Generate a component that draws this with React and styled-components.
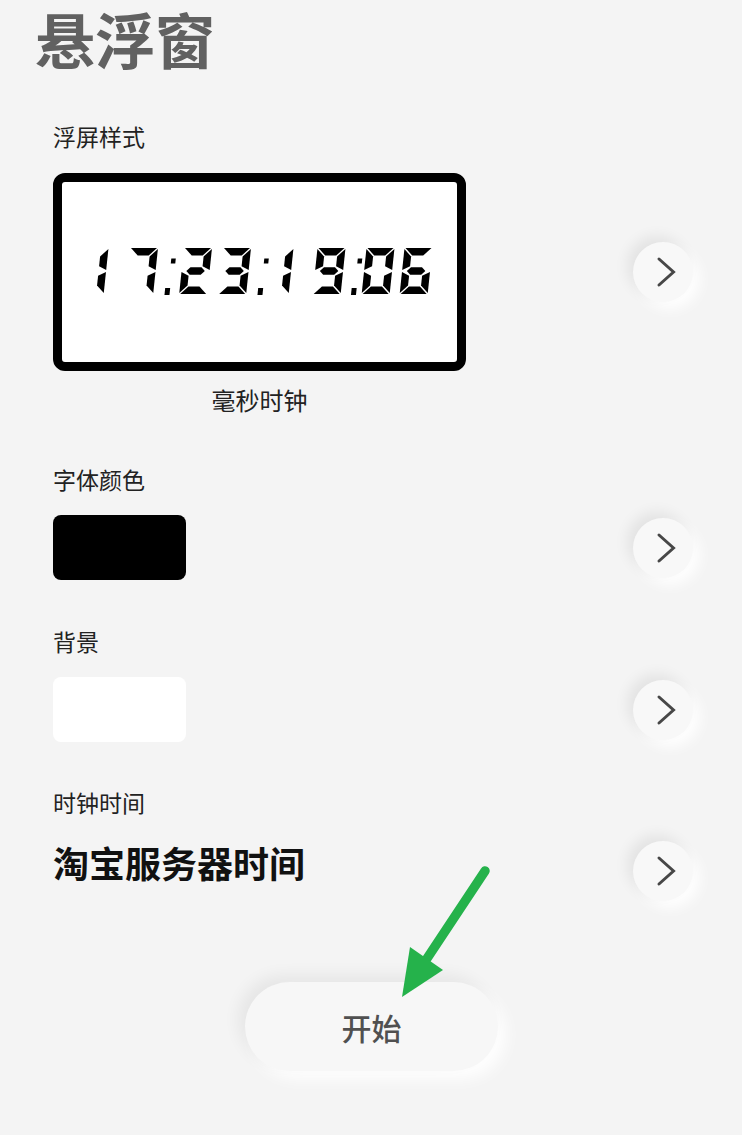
import React from "react";
import styled, { createGlobalStyle } from "styled-components";

const GlobalStyle = createGlobalStyle`
  html, body {
    margin: 0;
    padding: 0;
    background: #f4f4f4;
  }
  body {
    font-family: "Noto Sans CJK SC", "Noto Sans", sans-serif;
  }
`;

const Page = styled.div`
  width: 742px;
  min-height: 1135px;
  box-sizing: border-box;
  padding-top: 2px;
  display: flex;
  flex-direction: column;
  background: #f4f4f4;
`;

const Title = styled.h1`
  margin: 0;
  padding-left: 35px;
  font-size: 60px;
  line-height: 72px;
  font-weight: 700;
  color: #616161;
`;

const Settings = styled.div`
  display: flex;
  flex-direction: column;
  padding: 0 49px 0 53px;
`;

const Section = styled.section`
  display: flex;
  flex-direction: column;
  margin-top: ${(p) => p.$gap}px;
`;

const Label = styled.div`
  font-size: 23px;
  line-height: 1;
  color: #222;
`;

const Row = styled.div`
  display: flex;
  align-items: center;
  justify-content: space-between;
  margin-top: ${(p) => p.$gap}px;
`;

const ClockFace = styled.div`
  width: 413px;
  height: 198px;
  box-sizing: border-box;
  border: 9px solid #000;
  border-radius: 12px;
  background: #fff;
  display: flex;
  align-items: center;
  justify-content: center;
`;

const Caption = styled.div`
  width: 413px;
  margin-top: 17px;
  text-align: center;
  font-size: 24px;
  line-height: 1;
  color: #222;
`;

const Swatch = styled.div`
  width: 133px;
  height: 65px;
  border-radius: 8px;
  background: ${(p) => p.$color};
`;

const ValueText = styled.div`
  font-size: 36px;
  line-height: 1;
  font-weight: 700;
  color: #111;
  padding-bottom: 18px;
`;

const NavButton = styled.button`
  width: 60px;
  height: 60px;
  flex: none;
  padding: 0;
  border: none;
  border-radius: 50%;
  background: #f8f8f8;
  box-shadow: -6px -6px 14px rgba(0, 0, 0, 0.07),
    7px 7px 14px rgba(255, 255, 255, 0.95);
  display: flex;
  align-items: center;
  justify-content: center;
  cursor: pointer;
`;

const ButtonArea = styled.div`
  position: relative;
  display: flex;
  justify-content: center;
  margin-top: 81px;
`;

const StartButton = styled.button`
  width: 253px;
  height: 89px;
  border: none;
  border-radius: 45px;
  background: #f7f7f7;
  box-shadow: -7px -7px 16px rgba(0, 0, 0, 0.06),
    8px 8px 16px rgba(255, 255, 255, 0.95);
  font-family: "Noto Sans CJK SC", "Noto Sans", sans-serif;
  font-size: 30px;
  font-weight: 500;
  color: #505050;
  cursor: pointer;
  margin-left: 1px;
`;

const Pointer = styled.svg`
  position: absolute;
  left: 395px;
  top: -120px;
  overflow: visible;
  pointer-events: none;
`;

const Chevron = () => (
  <svg width="60" height="60" viewBox="0 0 60 60">
    <polyline
      points="26,17 40.5,30 26,43"
      fill="none"
      stroke="#474747"
      strokeWidth="3"
      strokeLinecap="round"
      strokeLinejoin="miter"
    />
  </svg>
);

/* seven-segment digit geometry */
const W = 28;
const H = 46;
const T = 7.5;
const G = 1;
const SEGMENTS = {
  a: [[G, 0], [W - G, 0], [W - G - T, T], [G + T, T]],
  b: [[W, G], [W, H / 2 - G], [W - T, H / 2 - G - T / 2], [W - T, G + T]],
  c: [[W, H / 2 + G], [W, H - G], [W - T, H - G - T], [W - T, H / 2 + G + T / 2]],
  d: [[G, H], [W - G, H], [W - G - T, H - T], [G + T, H - T]],
  e: [[0, H / 2 + G], [0, H - G], [T, H - G - T], [T, H / 2 + G + T / 2]],
  f: [[0, G], [0, H / 2 - G], [T, H / 2 - G - T / 2], [T, G + T]],
  g: [
    [G + T / 2, H / 2],
    [G + T, H / 2 - T / 2],
    [W - G - T, H / 2 - T / 2],
    [W - G - T / 2, H / 2],
    [W - G - T, H / 2 + T / 2],
    [G + T, H / 2 + T / 2],
  ],
};
const DIGITS = {
  0: "abcdef",
  1: "bc",
  2: "abged",
  3: "abgcd",
  6: "afgedc",
  7: "abc",
  9: "abcdfg",
};

const Digit = ({ value, x }) => (
  <g transform={`translate(${x} 1) skewX(-6)`}>
    {DIGITS[value].split("").map((s) => (
      <polygon key={s} points={SEGMENTS[s].map((p) => p.join(",")).join(" ")} />
    ))}
  </g>
);

const Colon = ({ x }) => (
  <g transform={`translate(${x} 0) skewX(-6)`}>
    <rect x="3" y="11.5" width="4.5" height="5" />
    <rect x="0" y="41" width="5" height="7" />
  </g>
);

const layout = [
  { d: 1, x: 0.5 },
  { d: 7, x: 50 },
  { c: true, x: 89.5 },
  { d: 2, x: 104 },
  { d: 3, x: 143 },
  { c: true, x: 182.5 },
  { d: 1, x: 185.5 },
  { d: 9, x: 237.5 },
  { c: true, x: 276 },
  { d: 0, x: 286.5 },
  { d: 6, x: 324.5 },
];

const SegmentClock = () => (
  <svg width="360" height="50" viewBox="0 0 360 50" fill="#000">
    {layout.map((item, i) =>
      item.c ? <Colon key={i} x={item.x} /> : <Digit key={i} value={item.d} x={item.x} />
    )}
  </svg>
);

export default function App() {
  return (
    <>
      <GlobalStyle />
      <Page>
        <Title>悬浮窗</Title>
        <Settings>
          <Section $gap={51}>
            <Label>浮屏样式</Label>
            <Row $gap={25}>
              <ClockFace>
                <SegmentClock />
              </ClockFace>
              <NavButton aria-label="浮屏样式">
                <Chevron />
              </NavButton>
            </Row>
            <Caption>毫秒时钟</Caption>
          </Section>

          <Section $gap={56}>
            <Label>字体颜色</Label>
            <Row $gap={24}>
              <Swatch $color="#000" />
              <NavButton aria-label="字体颜色">
                <Chevron />
              </NavButton>
            </Row>
          </Section>

          <Section $gap={50}>
            <Label>背景</Label>
            <Row $gap={24}>
              <Swatch $color="#fff" />
              <NavButton aria-label="背景">
                <Chevron />
              </NavButton>
            </Row>
          </Section>

          <Section $gap={49}>
            <Label>时钟时间</Label>
            <Row $gap={27}>
              <ValueText>淘宝服务器时间</ValueText>
              <NavButton aria-label="时钟时间">
                <Chevron />
              </NavButton>
            </Row>
          </Section>
        </Settings>

        <ButtonArea>
          <StartButton>开始</StartButton>
          <Pointer width="100" height="140" viewBox="0 0 100 140">
            <line x1="90" y1="9" x2="31" y2="98" stroke="#25b24b" strokeWidth="9.5" strokeLinecap="round" />
            <polygon points="7,135 15,85 48,108" fill="#25b24b" />
          </Pointer>
        </ButtonArea>
      </Page>
    </>
  );
}
